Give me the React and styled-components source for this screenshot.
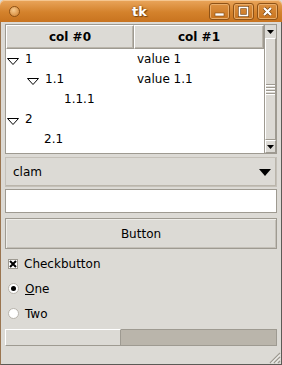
import React from 'react';
import styled, { createGlobalStyle } from 'styled-components';

const Global = createGlobalStyle`
  html, body { margin: 0; padding: 0; background: #dcdad5; }
  body { font-family: "DejaVu Sans", "Liberation Sans", sans-serif; font-size: 12px; color: #000; }
`;

const Window = styled.div`
  width: 282px;
  height: 365px;
  display: flex;
  flex-direction: column;
  box-sizing: border-box;
  overflow: hidden;
  background: #dcdad5;
`;

const TitleBar = styled.div`
  height: 22px;
  flex: none;
  display: flex;
  align-items: center;
  padding: 0 4px 0 9px;
  background: linear-gradient(#eaa65c, #d4822c 55%, #c8731f);
  border-radius: 5px 5px 0 0;
  box-shadow: inset 0 1px 0 #f5c690;
`;

const Knob = styled.div`
  width: 9px;
  height: 9px;
  border-radius: 50%;
  border: 1px solid #8e5216;
  background: radial-gradient(circle at 40% 35%, #f6c98d, #d07e2a);
`;

const Title = styled.div`
  flex: 1;
  text-align: center;
  color: #fff;
  font-weight: bold;
  font-size: 13px;
  text-shadow: 0 0 2px #7a4510, 1px 1px 1px #7a4510;
  padding-left: 50px;
`;

const WinButtons = styled.div`
  display: flex;
  gap: 3px;
`;

const WinBtn = styled.div`
  width: 21px;
  height: 17px;
  box-sizing: border-box;
  border: 1px solid #8e5216;
  border-radius: 3px;
  box-shadow: inset 0 0 0 1px #e9ad6a;
  background: linear-gradient(#dc9040, #c8741f);
  display: flex;
  align-items: center;
  justify-content: center;
`;

const Body = styled.div`
  flex: 1;
  display: flex;
  flex-direction: column;
  padding: 2px 4px 0 4px;
  border-left: 1px solid #9a7550;
  border-right: 1px solid #5c5a56;
  border-bottom: 1px solid #5c5a56;
  position: relative;
`;

const Tree = styled.div`
  height: 130px;
  box-sizing: border-box;
  border: 1px solid #9e9a91;
  background: #fff;
  display: flex;
`;

const TreeMain = styled.div`
  flex: 1;
  display: flex;
  flex-direction: column;
`;

const Header = styled.div`
  display: flex;
  height: 24px;
  flex: none;
`;

const HeadCell = styled.div`
  width: ${p => p.w}px;
  box-sizing: border-box;
  border: 1px solid #9e9a91;
  border-top-color: #fff;
  border-left-color: #fff;
  box-shadow: inset -1px -1px 0 #bab5ab;
  background: #dcdad5;
  display: flex;
  align-items: center;
  justify-content: center;
  font-weight: bold;
`;

const Row = styled.div`
  display: flex;
  height: 20px;
  align-items: center;
`;

const Cell = styled.div`
  width: ${p => p.w}px;
  display: flex;
  align-items: center;
  padding-left: ${p => p.indent}px;
  box-sizing: border-box;
`;

const Toggle = styled.svg`
  width: 12px;
  height: 7px;
  margin-right: 6px;
  margin-top: 4px;
`;

const Scrollbar = styled.div`
  width: 14px;
  background: #dcdad5;
  border-left: 1px solid #9e9a91;
  display: flex;
  flex-direction: column;
`;

const ArrowBox = styled.div`
  height: ${p => p.h}px;
  flex: none;
  box-sizing: border-box;
  display: flex;
  align-items: center;
  justify-content: center;
  ${p => p.framed && `
    border: 1px solid #9e9a91;
    border-top-color: #fff;
    border-left-color: #fff;
  `}
`;

const Thumb = styled.div`
  flex: 1;
  box-sizing: border-box;
  border: 1px solid #9e9a91;
  border-top-color: #fff;
  border-left-color: #fff;
  box-shadow: 0 1px 0 #9e9a91;
  display: flex;
  align-items: center;
  justify-content: center;
`;

const Grip = styled.div`
  width: 9px;
  height: 11px;
  background: repeating-linear-gradient(#9e9a91 0 1px, #fff 1px 2px, transparent 2px 3px);
`;

const Combo = styled.div`
  margin-top: 3px;
  height: 30px;
  box-sizing: border-box;
  border: 1px solid #9e9a91;
  border-top-color: #fff;
  border-left-color: #fff;
  box-shadow: inset -1px -1px 0 #bab5ab, 0 0 0 0 transparent;
  outline: 1px solid #c4c0b8;
  outline-offset: -1px;
  display: flex;
  align-items: center;
  justify-content: space-between;
  padding: 0 5px 0 7px;
`;

const Entry = styled.div`
  margin-top: 2px;
  height: 24px;
  box-sizing: border-box;
  border: 1px solid #9e9a91;
  background: #fff;
`;

const Button = styled.div`
  margin-top: 5px;
  height: 31px;
  box-sizing: border-box;
  border: 1px solid #9e9a91;
  box-shadow: inset 1px 1px 0 #eeede9, inset -1px -1px 0 #c4c0b8;
  display: flex;
  align-items: center;
  justify-content: center;
`;

const Options = styled.div`
  margin-top: 2px;
  display: flex;
  flex-direction: column;
`;

const OptRow = styled.div`
  height: 25px;
  display: flex;
  align-items: center;
  padding-left: 3px;
  gap: 6px;
`;

const CheckBox = styled.div`
  width: 10px;
  height: 10px;
  box-sizing: border-box;
  border: 1px solid #9e9a91;
  background: #fff;
  display: flex;
  align-items: center;
  justify-content: center;
`;

const Radio = styled.div`
  width: 11px;
  height: 11px;
  box-sizing: border-box;
  border-radius: 50%;
  border: 1px solid #b8b4ac;
  background: #fff;
  display: flex;
  align-items: center;
  justify-content: center;
  &::after {
    content: '';
    display: ${p => (p.on ? 'block' : 'none')};
    width: 5px;
    height: 5px;
    border-radius: 50%;
    background: #000;
  }
`;

const U = styled.span`
  text-decoration: underline;
`;

const Progress = styled.div`
  margin-top: 3px;
  height: 17px;
  box-sizing: border-box;
  border: 1px solid #9e9a91;
  background: #bab5ab;
  display: flex;
`;

const Fill = styled.div`
  box-sizing: border-box;
  border: 1px solid #9e9a91;
  border-left-color: #fff;
  border-top-color: #fff;
  background: #dcdad5;
  margin: -1px 0 -1px -1px;
`;

const ResizeGrip = styled.svg`
  position: absolute;
  right: 0;
  bottom: 0;
  width: 14px;
  height: 14px;
`;

const rows = [
  { indent: 1, label: '1', value: 'value 1', open: true },
  { indent: 21, label: '1.1', value: 'value 1.1', open: true },
  { indent: 58, label: '1.1.1', value: '' },
  { indent: 1, label: '2', value: '', open: true },
  { indent: 38, label: '2.1', value: '' },
];

function Tri({ filled, w = 9, h = 5 }) {
  return (
    <svg width={w} height={h} viewBox={`0 0 ${w} ${h}`}>
      <polygon points={`0,0 ${w},0 ${w / 2},${h}`} fill={filled ? '#000' : '#fff'} />
    </svg>
  );
}

export default function App() {
  return (
    <Window>
      <Global />
      <TitleBar>
        <Knob />
        <Title>tk</Title>
        <WinButtons>
          <WinBtn>
            <svg width="11" height="11" viewBox="0 0 11 11">
              <rect x="1" y="7" width="9" height="3" fill="#fff" stroke="#7a4510" strokeWidth="0.6" />
            </svg>
          </WinBtn>
          <WinBtn>
            <svg width="11" height="11" viewBox="0 0 11 11">
              <rect x="1.5" y="1.5" width="8" height="8" fill="none" stroke="#7a4510" strokeWidth="3" />
              <rect x="1.5" y="1.5" width="8" height="8" fill="none" stroke="#fff" strokeWidth="1.6" />
            </svg>
          </WinBtn>
          <WinBtn>
            <svg width="11" height="11" viewBox="0 0 11 11">
              <path d="M2 2 L9 9 M9 2 L2 9" stroke="#7a4510" strokeWidth="3.6" />
              <path d="M2 2 L9 9 M9 2 L2 9" stroke="#fff" strokeWidth="2.2" />
            </svg>
          </WinBtn>
        </WinButtons>
      </TitleBar>
      <Body>
        <Tree>
          <TreeMain>
            <Header>
              <HeadCell w={128}>col #0</HeadCell>
              <HeadCell w={130}>col #1</HeadCell>
            </Header>
            {rows.map(r => (
              <Row key={r.label}>
                <Cell w={128} indent={r.indent + (r.open ? 0 : 0)}>
                  {r.open && (
                    <Toggle viewBox="0 0 12 7">
                      <polygon points="0.5,0.5 11.5,0.5 6,6.5" fill="#fff" stroke="#000" strokeWidth="1" />
                    </Toggle>
                  )}
                  {r.label}
                </Cell>
                <Cell w={130} indent={3}>{r.value}</Cell>
              </Row>
            ))}
          </TreeMain>
          <Scrollbar>
            <ArrowBox h={13}><Tri filled w={7} h={4} /></ArrowBox>
            <Thumb><Grip /></Thumb>
            <ArrowBox h={13} framed><Tri filled w={7} h={4} /></ArrowBox>
          </Scrollbar>
        </Tree>
        <Combo>
          <span>clam</span>
          <Tri filled w={12} h={7} />
        </Combo>
        <Entry />
        <Button>Button</Button>
        <Options>
          <OptRow>
            <CheckBox>
              <svg width="8" height="8" viewBox="0 0 8 8">
                <path d="M1 1 L7 7 M7 1 L1 7" stroke="#000" strokeWidth="2" />
              </svg>
            </CheckBox>
            Checkbutton
          </OptRow>
          <OptRow>
            <Radio on />
            <span><U>O</U>ne</span>
          </OptRow>
          <OptRow>
            <Radio />
            Two
          </OptRow>
        </Options>
        <Progress>
          <Fill style={{ width: `${(116 / 271) * 100}%` }} />
        </Progress>
        <ResizeGrip viewBox="0 0 14 14">
          <path d="M13 3 L3 13 M13 7 L7 13 M13 11 L11 13" stroke="#9e9a91" strokeWidth="1.2" />
          <path d="M13 4.5 L4.5 13 M13 8.5 L8.5 13" stroke="#fff" strokeWidth="0.8" />
        </ResizeGrip>
      </Body>
    </Window>
  );
}
